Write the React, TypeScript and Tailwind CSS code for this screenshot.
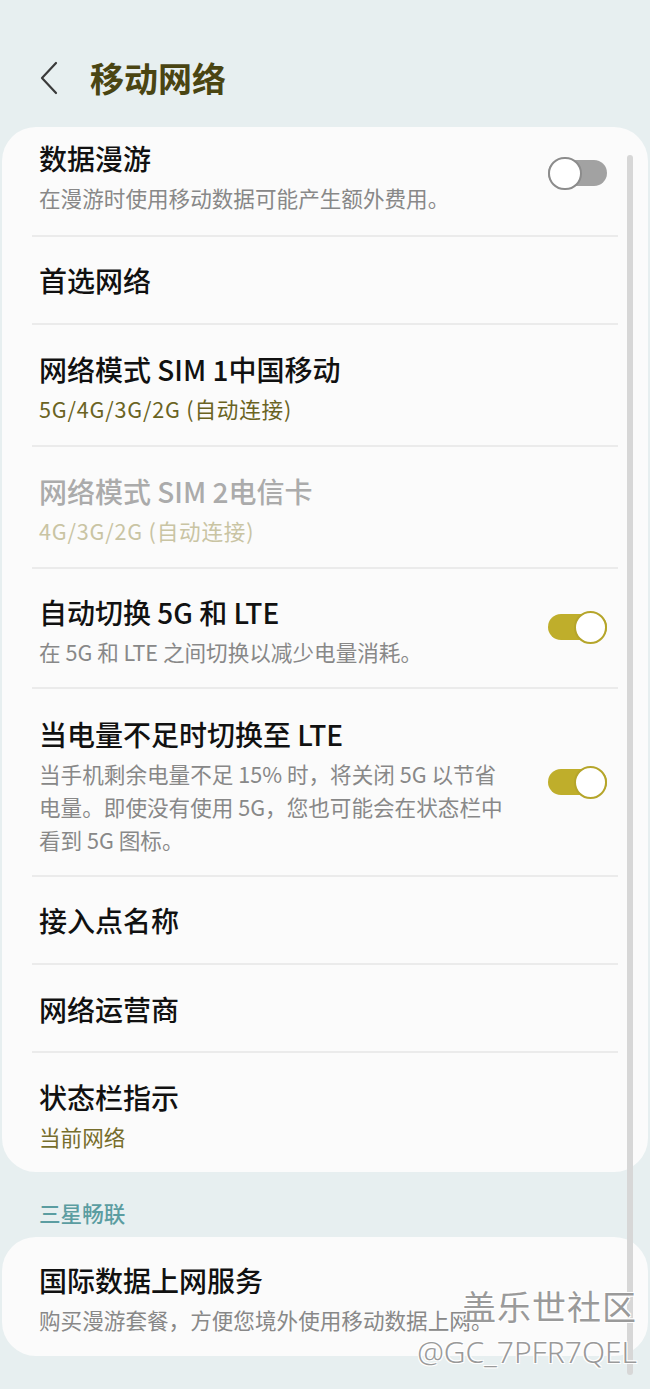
import React from "react";

function Toggle({ on }: { on: boolean }) {
  return (
    <div className="relative w-[59px] h-[33px] shrink-0 flex items-center mb-[8px]">
      {on ? (
        <>
          <div className="h-[26px] w-full rounded-full bg-[#bfae2b]" />
          <div className="absolute top-0 right-0 w-[33px] h-[33px] rounded-full bg-white border-2 border-[#b5a52a]" />
        </>
      ) : (
        <>
          <div className="h-[26px] w-full rounded-full bg-[#a2a2a2]" />
          <div className="absolute top-0 left-0 w-[34px] h-[33px] rounded-full bg-white border-2 border-[#8c8c8c]" />
        </>
      )}
    </div>
  );
}

function Divider() {
  return <div className="mx-[30px] h-[2px] bg-[#ebebeb]" />;
}

const titleCls = "text-[28px] leading-[36px] font-medium text-[#111111]";
const subCls = "mt-[5px] text-[21.6px] leading-[33px] text-[#888888]";

export default function App() {
  return (
    <div className="relative w-[650px] h-[1389px] overflow-hidden bg-[#e7eff0] font-['Noto_Sans_CJK_SC','Noto_Sans',sans-serif]">
      {/* Header */}
      <div className="h-[127px] pt-[54px] flex items-start">
        <div className="h-[48px] flex items-center pl-[38px]">
          <svg width="22" height="34" viewBox="0 0 22 34" fill="none">
            <path d="M18 2 L4 17 L18 32" stroke="#3a3a3a" strokeWidth="2.2" strokeLinecap="round" strokeLinejoin="round" />
          </svg>
          <span className="ml-[30px] text-[34px] leading-[48px] font-bold text-[#4a4512]">移动网络</span>
        </div>
      </div>

      {/* Card 1 */}
      <div className="mx-[2px] rounded-[34px] bg-[#fbfbfb]">
        {/* 数据漫游 */}
        <div className="flex items-center justify-between pl-[37px] pr-[41px] pt-[13px] pb-[21px]">
          <div>
            <div className={titleCls}>数据漫游</div>
            <div className={subCls}>在漫游时使用移动数据可能产生额外费用。</div>
          </div>
          <Toggle on={false} />
        </div>
        <Divider />
        {/* 首选网络 */}
        <div className="pl-[37px] pr-[41px] pt-[25px] pb-[25px]">
          <div className={titleCls}>首选网络</div>
        </div>
        <Divider />
        {/* SIM 1 */}
        <div className="pl-[37px] pr-[41px] pt-[26px] pb-[20px]">
          <div className={titleCls}>网络模式 SIM 1中国移动</div>
          <div className="mt-[5px] text-[21.6px] leading-[33px] tracking-[0.8px] text-[#6a6322]">5G/4G/3G/2G (自动连接)</div>
        </div>
        <Divider />
        {/* SIM 2 */}
        <div className="pl-[37px] pr-[41px] pt-[26px] pb-[20px]">
          <div className="text-[28px] leading-[36px] font-medium text-[#ababab]">网络模式 SIM 2电信卡</div>
          <div className="mt-[5px] text-[21.6px] leading-[33px] tracking-[0.8px] text-[#c9c4a3]">4G/3G/2G (自动连接)</div>
        </div>
        <Divider />
        {/* 自动切换 */}
        <div className="flex items-center justify-between pl-[37px] pr-[41px] pt-[25px] pb-[19px]">
          <div>
            <div className={titleCls}>自动切换 5G 和 LTE</div>
            <div className={subCls}>在 5G 和 LTE 之间切换以减少电量消耗。</div>
          </div>
          <Toggle on={true} />
        </div>
        <Divider />
        {/* 当电量不足时 */}
        <div className="flex items-center justify-between pl-[37px] pr-[41px] pt-[27px] pb-[19px]">
          <div>
            <div className={titleCls}>当电量不足时切换至 LTE</div>
            <div className={subCls}>
              当手机剩余电量不足 15% 时，将关闭 5G 以节省
              <br />
              电量。即使没有使用 5G，您也可能会在状态栏中
              <br />
              看到 5G 图标。
            </div>
          </div>
          <Toggle on={true} />
        </div>
        <Divider />
        {/* 接入点名称 */}
        <div className="pl-[37px] pr-[41px] pt-[25px] pb-[25px]">
          <div className={titleCls}>接入点名称</div>
        </div>
        <Divider />
        {/* 网络运营商 */}
        <div className="pl-[37px] pr-[41px] pt-[26px] pb-[24px]">
          <div className={titleCls}>网络运营商</div>
        </div>
        <Divider />
        {/* 状态栏指示 */}
        <div className="pl-[37px] pr-[41px] pt-[26px] pb-[19px]">
          <div className={titleCls}>状态栏指示</div>
          <div className="mt-[5px] text-[21.6px] leading-[33px] text-[#776e2c]">当前网络</div>
        </div>
      </div>

      {/* Section header */}
      <div className="mt-[26px] mb-[9px] pl-[39px] text-[21.6px] leading-[30px] font-medium text-[#5b9da1]">三星畅联</div>

      {/* Card 2 */}
      <div className="mx-[2px] rounded-[34px] bg-[#fbfbfb] pl-[37px] pr-[41px] pt-[25px] pb-[20px]">
        <div className={titleCls}>国际数据上网服务</div>
        <div className={subCls}>购买漫游套餐，方便您境外使用移动数据上网。</div>
      </div>

      {/* Scrollbar */}
      <div className="absolute left-[627px] top-[155px] w-[6px] h-[1220px] rounded-full bg-[#d7d7d7]" />

      {/* Watermark */}
      <div className="absolute right-[13px] top-[1284px] flex flex-col items-end text-[#9a9a9a] [text-shadow:1px_1px_0_#ffffff,-1px_-1px_0_#ffffff,1px_-1px_0_#ffffff,-1px_1px_0_#ffffff]">
        <div className="text-[34px] leading-[44px] tracking-[1px]">盖乐世社区</div>
        <div className="mt-[4px] text-[30px] leading-[40px] font-['Noto_Sans','Liberation_Sans',sans-serif] font-light">@GC_7PFR7QEL</div>
      </div>
    </div>
  );
}
